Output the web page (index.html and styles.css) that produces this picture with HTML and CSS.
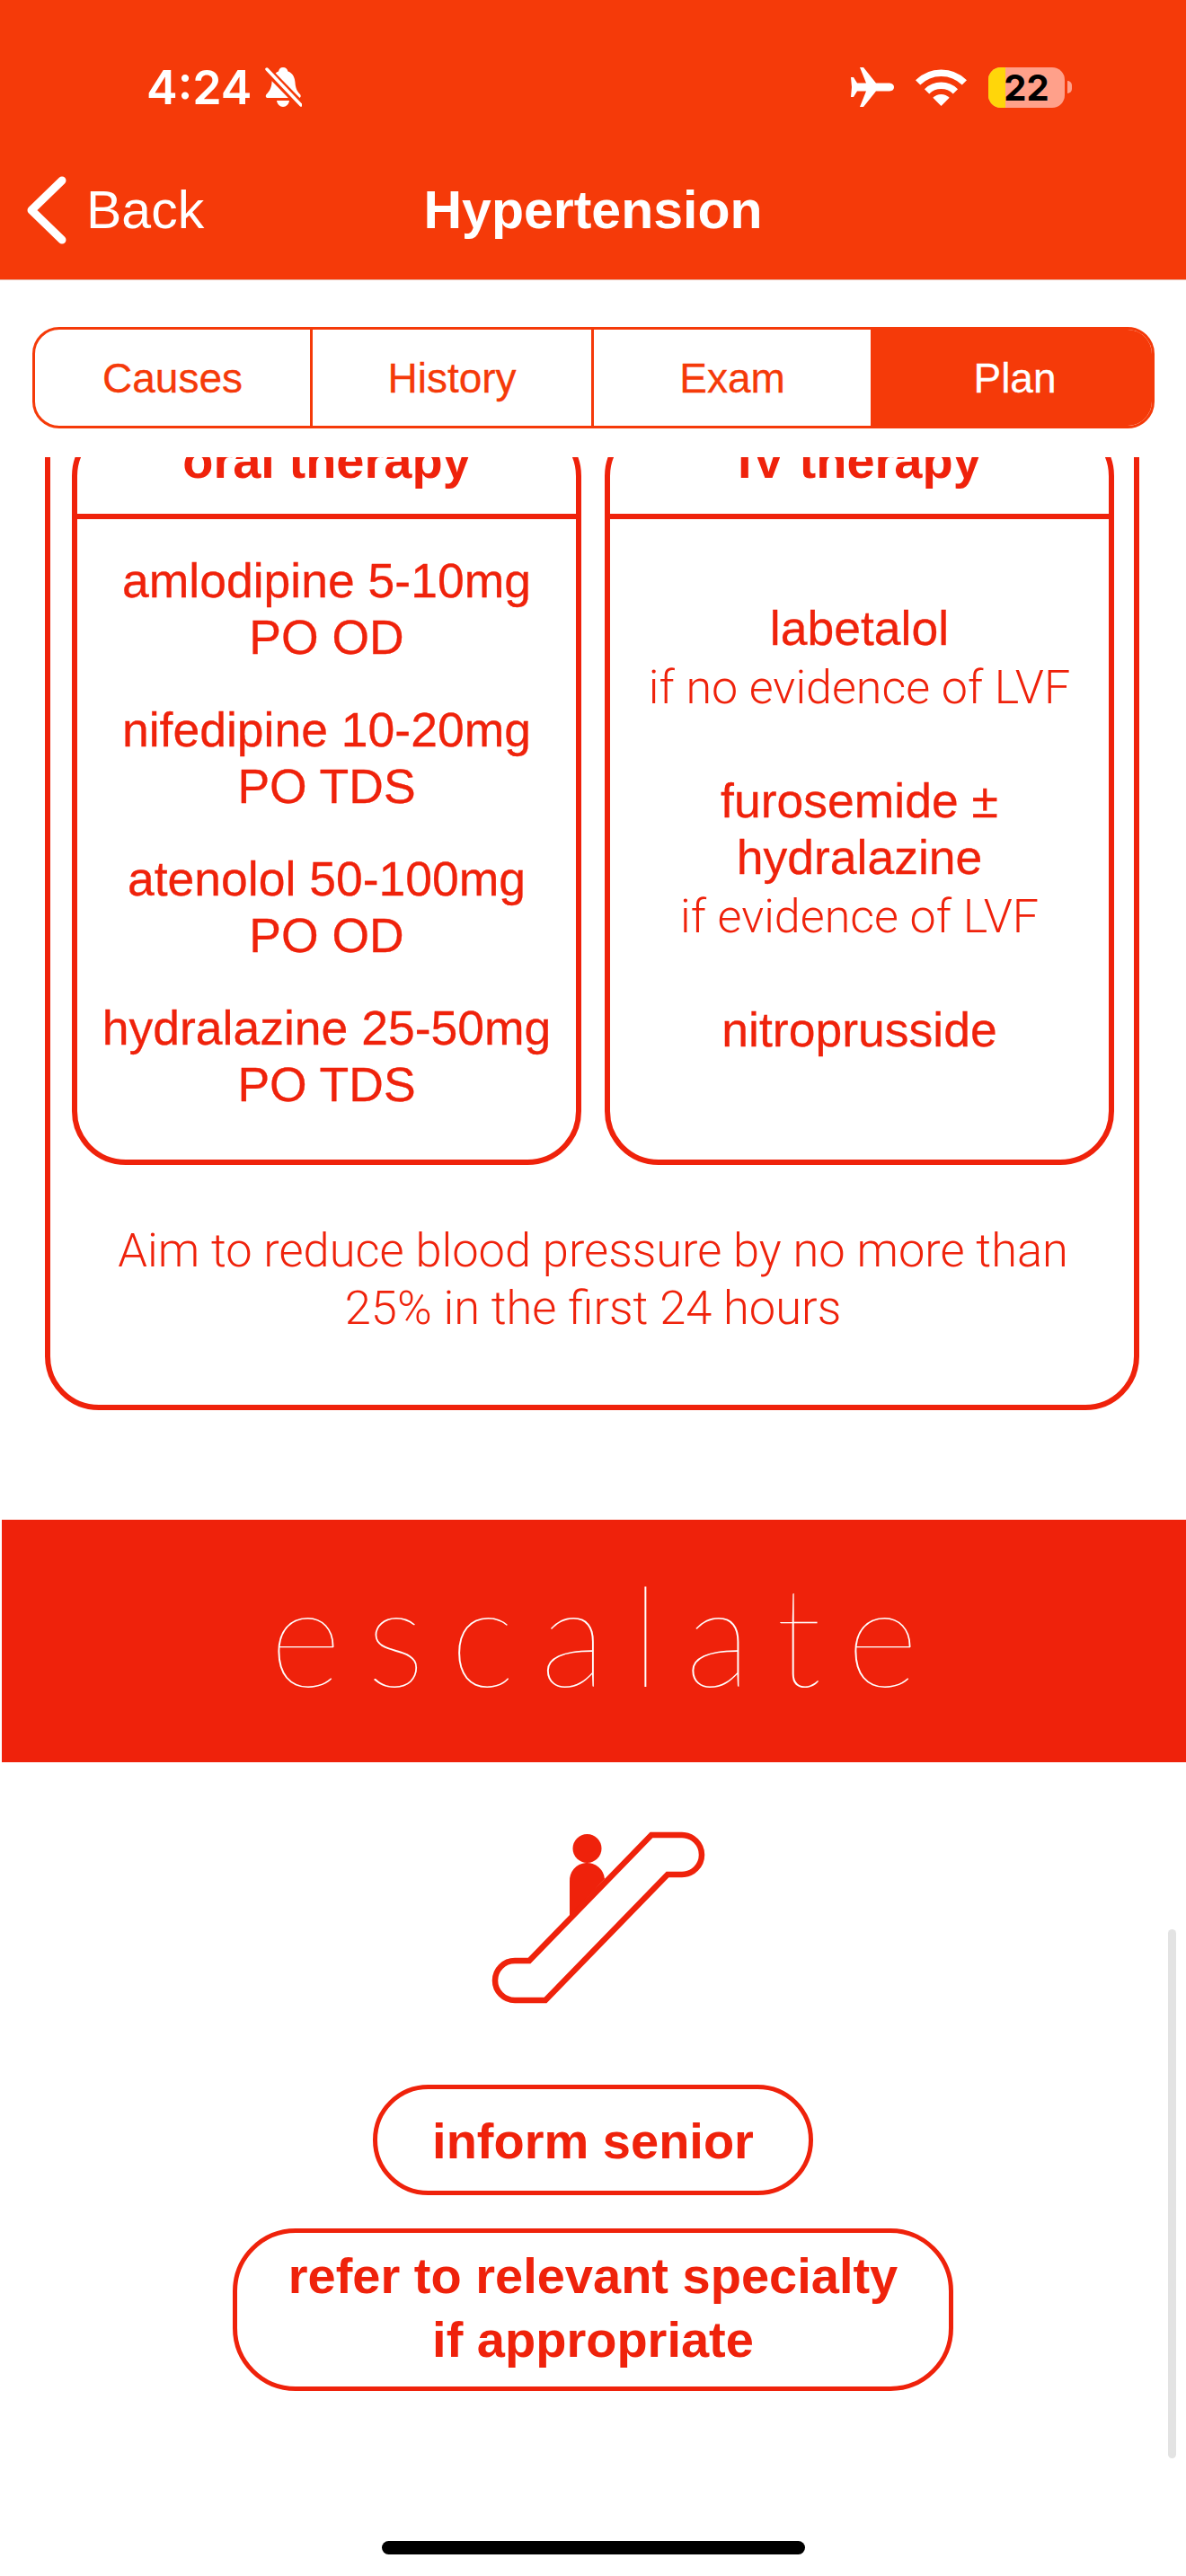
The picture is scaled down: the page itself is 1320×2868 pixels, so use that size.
FILE: index.html
```html
<!DOCTYPE html>
<html lang="en">
<head>
    <meta charset="UTF-8">
    <title>Hypertension</title>
    <link rel="stylesheet" href="styles.css">
</head>
<body>
    <header class="top">
        <div class="status">
            <div class="status-left">
                <span class="time">4:24</span>
                <svg class="bell" width="41" height="46" viewBox="0 0 41 46">
                    <path fill="#fff" d="M20 1c3 0 5 2 5.500 4.500C31 7.500 33 12 33.500 18c.4 6 2 9.500 5.500 13 1.500 2 .5 4-1.500 4H3c-2 0-3-2-1.500-4C5 27.500 7 24 7.500 18 8 12 10 7.500 15 5.500 15.500 3 17 1 20 1z"/>
                    <path fill="#fff" d="M13 38h14c-.5 4-3.500 7-7 7s-6.500-3-7-7z"/>
                    <path stroke="#f53a09" stroke-width="9" d="M1 3l39 40"/>
                    <path stroke="#fff" stroke-width="3.500" stroke-linecap="round" d="M2 3l38 40"/>
                </svg>
            </div>
            <div class="status-right">
                <svg width="49" height="44" viewBox="0 0 49 44">
                    <path fill="#fff" d="M49 22q0-4-5-4.500H29L15 0h-4l7 17.500H8L4 11H1L2 22 1 33h3l4-6.500h10L11 44h4l14-17.500h15q5-.5 5-4.500z"/>
                </svg>
                <svg width="57" height="41" viewBox="0 0 57 41">
                    <g fill="none" stroke="#fff" stroke-width="7.500">
                        <path d="M2.600 14.900a36.700 36.700 0 0 1 51.800 0"/>
                        <path d="M12.600 24.900a22.500 22.500 0 0 1 31.800 0"/>
                    </g>
                    <path fill="#fff" d="M28.500 41l-9.200-9.200a13 13 0 0 1 18.400 0z"/>
                </svg>
                <div class="battery">
                    <span class="battery-fill"></span>
                    <span class="battery-num">22</span>
                </div>
                <span class="battery-nub"></span>
            </div>
        </div>
        <nav class="nav">
            <a class="back" href="#">
                <svg width="50" height="80" viewBox="0 0 50 80">
                    <path fill="none" stroke="#fff" stroke-width="9" stroke-linecap="round" stroke-linejoin="round" d="M43 7L9 40l34 33"/>
                </svg>
                Back
            </a>
            <h1 class="title">Hypertension</h1>
            <span></span>
        </nav>
    </header>

    <div class="tabs-wrap">
        <div class="tabs">
            <a class="tab" href="#">Causes</a>
            <a class="tab" href="#">History</a>
            <a class="tab" href="#">Exam</a>
            <a class="tab active" href="#">Plan</a>
        </div>
    </div>

    <main class="scroll">
        <div class="scroll-inner">
            <section class="plan-card">
                <div class="therapy-grid">
                    <div class="therapy">
                        <h2 class="therapy-head">oral therapy</h2>
                        <div class="therapy-body">
                            <p class="drug">amlodipine 5-10mg<br>PO OD</p>
                            <p class="drug">nifedipine 10-20mg<br>PO TDS</p>
                            <p class="drug">atenolol 50-100mg<br>PO OD</p>
                            <p class="drug">hydralazine 25-50mg<br>PO TDS</p>
                        </div>
                    </div>
                    <div class="therapy">
                        <h2 class="therapy-head">IV therapy</h2>
                        <div class="therapy-body iv">
                            <div class="iv-item">
                                <p class="drug">labetalol</p>
                                <p class="note">if no evidence of LVF</p>
                            </div>
                            <div class="iv-item">
                                <p class="drug">furosemide ±<br>hydralazine</p>
                                <p class="note">if evidence of LVF</p>
                            </div>
                            <div class="iv-item">
                                <p class="drug">nitroprusside</p>
                            </div>
                        </div>
                    </div>
                </div>
                <p class="aim">Aim to reduce blood pressure by no more than<br>25% in the first 24 hours</p>
            </section>

            <div class="banner">escalate</div>

            <svg class="escalator" width="320" height="260" viewBox="0 0 320 260">
                <circle cx="153.500" cy="58" r="16" fill="#ef220b"/>
                <path fill="#ef220b" d="M134 134V95a19.500 19.500 0 0 1 39-3z"/>
                <path fill="none" stroke="#ef220b" stroke-width="6.500" d="M225 43h34a22 22 0 0 1 0 44h-16L107 227H73a22 22 0 0 1 0-44h16z"/>
            </svg>

            <div class="actions">
                <div class="pill inform">inform senior</div>
                <div class="pill refer">refer to relevant specialty<br>if appropriate</div>
            </div>
        </div>
    </main>

    <span class="scrollbar"></span>
    <span class="home-bar"></span>
</body>
</html>
```

FILE: styles.css
```css
* {
    box-sizing: border-box;
}
html, body {
    margin: 0;
    height: 2868px;
    overflow: hidden;
}
body {
    position: relative;
    display: flex;
    flex-direction: column;
    width: 1320px;
    background: #fff;
    font-family: "Liberation Sans", Arial, sans-serif;
    color: #ef220b;
}
p, h1, h2 {
    margin: 0;
}

/* header */
.top {
    height: 312px;
    flex: none;
    background: #f53a09;
    border-bottom: 1px solid #e6b3a3;
    color: #fff;
}
.status {
    display: flex;
    justify-content: space-between;
    align-items: center;
    height: 194px;
    padding: 0 127px 0 163px;
}
.status-left {
    display: flex;
    align-items: center;
    gap: 15px;
}
.time {
    font-family: Inter, sans-serif;
    font-weight: 600;
    font-size: 52px;
}
.status-right {
    display: flex;
    align-items: center;
    gap: 24px;
}
.battery {
    position: relative;
    width: 85px;
    height: 45px;
    border-radius: 14px;
    background: #ffa08a;
    text-align: center;
}
.battery-fill {
    position: absolute;
    left: 0;
    top: 0;
    bottom: 0;
    width: 19px;
    border-radius: 14px 0 0 14px;
    background: #ffd60a;
}
.battery-num {
    position: relative;
    font-family: Inter, sans-serif;
    font-weight: 700;
    font-size: 40px;
    line-height: 45px;
    color: #000;
}
.battery-nub {
    width: 5px;
    height: 14px;
    margin-left: -21px;
    border-radius: 0 7px 7px 0;
    background: #ffa08a;
}
.nav {
    display: grid;
    grid-template-columns: 1fr auto 1fr;
    align-items: center;
    height: 80px;
}
.back {
    display: flex;
    align-items: center;
    gap: 20px;
    padding-left: 26px;
    color: #fff;
    text-decoration: none;
    font-size: 59px;
}
.title {
    font-size: 59px;
    font-weight: 700;
}

/* segmented tabs */
.tabs-wrap {
    flex: none;
    padding: 52px 35px 32px 36px;
}
.tabs {
    display: grid;
    grid-template-columns: 309px 313px 311px 1fr;
    height: 113px;
    border: 3px solid #f53a09;
    border-radius: 30px;
    overflow: hidden;
}
.tab {
    display: flex;
    align-items: center;
    justify-content: center;
    border-right: 3px solid #f53a09;
    color: #f53a09;
    text-decoration: none;
    font-size: 46px;
    -webkit-text-stroke: 0.3px;
}
.tab.active {
    padding-left: 5px;
    border-right: 0;
    background: #f53a09;
    color: #fff;
}

/* scrolled content */
.scroll {
    flex: 1;
    overflow: hidden;
}
.scroll-inner {
    margin-top: -69px;
}
.plan-card {
    margin: 0 52px 0 50px;
    padding: 24px 22px 76px 24px;
    border: 6px solid #ef220b;
    border-radius: 60px;
    text-align: center;
}
.therapy-grid {
    display: grid;
    grid-template-columns: 1fr 1fr;
    gap: 26px;
}
.therapy {
    border: 6px solid #ef220b;
    border-radius: 60px;
}
.therapy-head {
    padding: 7px 0 29px;
    border-bottom: 6px solid #ef220b;
    font-size: 56px;
    line-height: 60px;
}
.therapy-body {
    padding: 37px 0 52px;
}
.therapy-body.iv {
    padding-top: 90px;
}
.drug {
    font-size: 53.5px;
    line-height: 63px;
    -webkit-text-stroke: 0.3px;
}
.therapy-body > .drug + .drug {
    margin-top: 40px;
}
.iv-item + .iv-item {
    margin-top: 62px;
}
.note {
    margin-top: 3px;
    font-family: Roboto, sans-serif;
    font-weight: 300;
    font-size: 52px;
    line-height: 64px;
}
.aim {
    margin-top: 63px;
    font-family: Roboto, sans-serif;
    font-weight: 300;
    font-size: 52.4px;
    line-height: 64px;
}
.banner {
    height: 270px;
    margin: 122px 0 0 2px;
    padding-left: 28px;
    background: #ef220b;
    color: #fff;
    text-align: center;
    font-family: Lato, sans-serif;
    font-weight: 100;
    font-size: 155px;
    line-height: 252px;
    letter-spacing: 28px;
}
.escalator {
    display: block;
    margin: 38px auto 0;
}
.actions {
    display: flex;
    flex-direction: column;
    align-items: center;
    gap: 37px;
    margin-top: 61px;
}
.pill {
    border: 5px solid #ef220b;
    text-align: center;
    font-size: 56px;
    font-weight: 700;
    line-height: 71px;
}
.inform {
    padding: 22px 61px 20px;
    border-radius: 62px;
}
.refer {
    padding: 12px 57px 17px;
    border-radius: 70px;
}

/* overlays */
.scrollbar {
    position: absolute;
    left: 1300px;
    top: 2148px;
    width: 9px;
    height: 589px;
    border-radius: 5px;
    background: #e3e3e3;
}
.home-bar {
    position: absolute;
    left: 425px;
    top: 2829px;
    width: 471px;
    height: 15px;
    border-radius: 8px;
    background: #000;
}
```
